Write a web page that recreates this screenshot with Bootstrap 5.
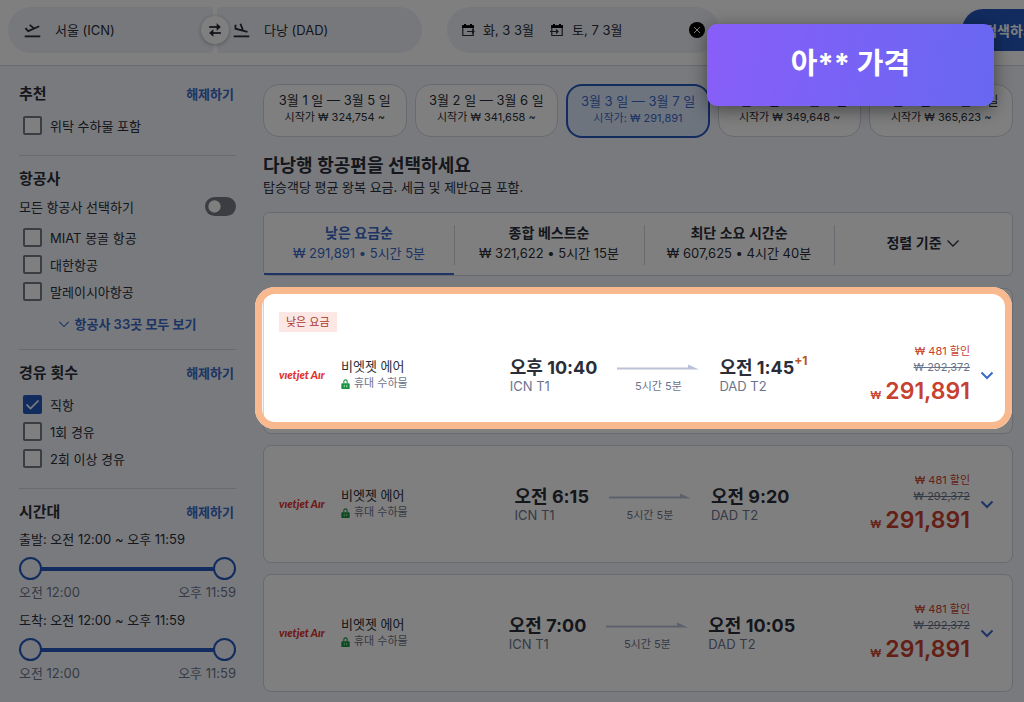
<!DOCTYPE html>
<html lang="ko">
<head>
<meta charset="utf-8">
<meta name="viewport" content="width=device-width, initial-scale=1">
<title>다낭행 항공편</title>
<link href="https://cdn.jsdelivr.net/npm/bootstrap@5.3.0/dist/css/bootstrap.min.css" rel="stylesheet">
<style>
:root{--blue:#3a69c8;--blue-deep:#2459c0;--ink:#2a2e38;--muted:#6c748c;--line:#cfd4df;--red:#c8402f;--page:#f2f5fa}
body{font-family:Inter,"Noto Sans CJK KR",sans-serif;background:var(--page);color:var(--ink);font-size:13px;line-height:18px;overflow-x:hidden}
a{color:var(--blue);text-decoration:none}
.topbar{background:#fff;border-bottom:1px solid var(--line);padding:7px 0 12px 8px;overflow:hidden}
.topbar-row{min-width:1050px}
.field{background:#eef1f8;height:46px;font-size:13px;border:0;color:var(--ink)}
.route-field{width:205px;padding-left:16px;gap:14px;text-align:left}
.from{border-radius:23px 4px 4px 23px}
.to{border-radius:4px 23px 23px 4px}
.swap{width:28px;height:28px;left:50%;top:50%;transform:translate(-50%,-50%);background:#fff;border:0;border-radius:50%;box-shadow:0 1px 4px rgba(0,0,0,.3)}
.dates{width:272px;border-radius:23px;padding:0 14px;margin-left:25px}
.clear-btn{width:16px;height:16px;border:0;border-radius:50%;background:#000;color:#fff}
.search-btn,.search-btn:hover{height:42px;width:96px;border-radius:21px;background:var(--blue-deep);color:#fff;font-size:14px;font-weight:600}
.layout{padding:18px 11px 10px 19px;gap:27px}
.filters{width:217px}
.filters section{border-bottom:1px solid var(--line);padding-bottom:16px;margin-bottom:13px}
.filters section:last-child{border:0;margin:0;padding:0}
.filters h2{font-size:15px;line-height:20px;font-weight:600;margin:0}
.reset{font-weight:600}
.head-row .reset{padding-right:2px}
.show-all{margin-top:10px}
.opt{display:flex;align-items:center;gap:8px;height:27px;padding-left:4px}
.opt .form-check-input{width:19px;height:19px;margin:0;border:2px solid #777b85;border-radius:2px;background-color:#fff}
.opt .form-check-input:checked{background-color:var(--blue-deep);border-color:var(--blue-deep);background-size:19px;background-image:url("data:image/svg+xml,%3csvg xmlns='http://www.w3.org/2000/svg' viewBox='0 0 19 19'%3e%3cpath d='M3.500 9.500l4 4 8-8' fill='none' stroke='%23fff' stroke-width='1.700'/%3e%3c/svg%3e")}
.toggle .form-check-input{width:31px;height:19px;margin:0;background-color:#777b85;border:0}
.toggle .form-check-input:not(:checked){background-image:url("data:image/svg+xml,%3csvg xmlns='http://www.w3.org/2000/svg' viewBox='-4 -4 8 8'%3e%3ccircle r='2.600' fill='%23fff'/%3e%3c/svg%3e")}
.dual{display:grid;height:24px;margin:9px 0 1px}
.dual input{grid-area:1/1;height:24px;pointer-events:none}
.dual input::-webkit-slider-runnable-track{height:4px;background:var(--blue-deep)}
.dual input+input::-webkit-slider-runnable-track{background:transparent}
.dual input::-webkit-slider-thumb{width:23px;height:23px;margin-top:-10px;background:var(--page);border:2px solid var(--blue-deep);pointer-events:auto}
.ends{color:var(--muted);line-height:20px;margin-bottom:9px}
.date-card{flex:1 1 20%;height:53px;padding:6px 0 0;background:#fff;border:1px solid var(--line);border-radius:16px;color:var(--ink);display:flex;flex-direction:column;align-items:center;justify-content:flex-start;white-space:nowrap}
.date-card span{font-size:13px;line-height:18px}
.date-card small{font-size:11px;line-height:16px}
.date-card.picked{height:54px;border:2px solid var(--blue-deep);background:#dde8fc;color:var(--blue)}
.headline{font-size:18px;line-height:24px;font-weight:600;margin:0}
.sorts{height:64px;background:#fff;border:1px solid var(--line);border-radius:6px}
.sort-tab{flex:190 1 0;background:none;border:0;border-bottom:2px solid transparent;padding:0;position:relative;color:var(--ink);line-height:20px}
.sort-tab b{display:block;font-size:14px;font-weight:600}
.sort-tab+.sort-tab::before{content:"";position:absolute;left:0;top:12px;height:40px;border-left:1px solid var(--line)}
.sort-tab.current{color:var(--blue);border-color:var(--blue)}
.sort-tab:last-child{flex-grow:178}
.fares{gap:11px;margin-top:12px}
.fare{background:#fff;border:1px solid var(--line);border-radius:8px;padding:29px 18px 29px 15px;position:relative}
.fare.best{padding-top:23px}
.tag{display:inline-block;background:#fde7e4;color:#a9352b;font-size:11px;line-height:20px;padding:0 7px;margin-bottom:14px}
.fare-row{height:58px}
.logo-text{width:62px;font:italic 900 11px/14px Lato,sans-serif;color:#e0322c;white-space:nowrap}
.airline{width:121px;line-height:17px}
.small-note{font-size:11px;line-height:17px;color:var(--muted)}
.flight{gap:20px}
.clock{font-size:18px;line-height:22px;font-weight:700;position:relative;white-space:nowrap}
.next-day{position:absolute;left:100%;top:-7px;font-size:12px;color:#b9531c}
.place{line-height:14px;color:var(--muted)}
.span-col{width:82px;font-size:11px;line-height:14px;color:var(--muted);text-align:center}
.span-col svg{display:block;height:22px}
.price{width:128px;text-align:right;color:var(--red)}
.price div{font-size:11px;line-height:16px}
.price .old{color:var(--muted)}
.price .now{font-size:23px;line-height:26px;padding-top:3px;font-weight:600;display:flex;justify-content:flex-end;align-items:baseline;gap:4px}
.price .now small{font-size:11px}
.more{border:0;background:none;padding:0;margin-left:10px;color:var(--blue);line-height:0}
.spotlight{position:absolute;z-index:10;inset:-2px 0 4px -9px;border:7px solid #f9b98f;border-radius:20px;box-shadow:0 0 0 3000px rgba(0,0,0,.5);pointer-events:none}
.callout{position:absolute;z-index:20;top:24px;right:30px;width:287px;height:82px;padding-bottom:3px;border-radius:10px;background:linear-gradient(100deg,#885ef8,#6867f2);box-shadow:0 4px 18px rgba(0,0,0,.45);color:#fff;font-size:29px;font-weight:700}
</style>
</head>
<body>
<svg class="d-none" xmlns="http://www.w3.org/2000/svg">
  <symbol id="i-down" viewBox="0 0 14 14"><path d="M1.500 4.500 7 10l5.500-5.500" fill="none" stroke="currentColor" stroke-width="2"/></symbol>
  <symbol id="i-thin" viewBox="0 0 14 14"><path d="M1.500 4.500 7 10l5.500-5.500" fill="none" stroke="currentColor" stroke-width="1.300"/></symbol>
  <symbol id="i-lock" viewBox="0 0 10 12"><path d="M1 5h8q1 0 1 1v5q0 1-1 1H1q-1 0-1-1V6q0-1 1-1z" fill="#16923f"/><path d="M3 5V3a2 2 0 0 1 4 0v2" fill="none" stroke="#16923f" stroke-width="1.300"/><path d="M3.500 7v3M6.500 7v3" stroke="#bfe6cb"/></symbol>
  <symbol id="i-arrow" viewBox="0 0 82 22"><path d="M0 12.500h82L71 7.500v3H0z" fill="#bcc1d6"/></symbol>
  <symbol id="i-off" viewBox="0 0 24 24"><path d="M2 8.500l4 4.500L21.500 6M8 4l6 5" fill="none" stroke="currentColor" stroke-width="2.600"/><path d="M1 19h22v2.600H1z" fill="currentColor"/></symbol>
  <symbol id="i-land" viewBox="0 0 24 24"><path d="M3.500 4v5.500L20.500 14M10.500 2.500l3.500 9" fill="none" stroke="currentColor" stroke-width="2.600"/><path d="M1 19h22v2.600H1z" fill="currentColor"/></symbol>
  <symbol id="i-cal" viewBox="0 0 14 14"><path d="M1.800 3h10.400v9.500H1.800z" fill="none" stroke="currentColor" stroke-width="1.200"/><path d="M1 2.300h12V5H1zM3 1h2v2H3zM9 1h2v2H9z"/></symbol>
</svg>

<header class="topbar">
  <div class="topbar-row d-flex align-items-center">
    <div class="d-flex gap-1 position-relative">
      <button class="field route-field from d-flex align-items-center"><svg width="17" height="17"><use href="#i-off"/></svg>서울 (ICN)</button>
      <button class="field route-field to d-flex align-items-center"><svg width="17" height="17"><use href="#i-land"/></svg>다낭 (DAD)</button>
      <button class="swap position-absolute d-flex align-items-center justify-content-center p-0" aria-label="출발지와 도착지 바꾸기"><svg width="12" height="14" viewBox="0 0 12 14"><path d="M0 3h7.500V0L12 4 7.500 8V5H0zM12 9H4.500V6L0 10l4.500 4v-3H12z" fill="#22262f" stroke="#fff" stroke-width=".3"/></svg></button>
    </div>
    <div class="field dates d-flex align-items-center">
      <svg class="me-2" width="14" height="14"><use href="#i-cal"/><path d="M6 8.500h7M11 6.500l2 2-2 2" fill="none" stroke="currentColor" stroke-width="1.200"/></svg>
      <span class="me-3">화, 3 3월</span>
      <svg class="me-2" width="14" height="14"><use href="#i-cal"/><path d="M0 8.500h8M6 6.500l2 2-2 2" fill="none" stroke="currentColor" stroke-width="1.200"/></svg>
      <span>토, 7 3월</span>
      <button class="clear-btn ms-auto p-0 d-flex align-items-center justify-content-center" aria-label="날짜 지우기"><svg width="8" height="8" viewBox="0 0 8 8"><path d="M1 1l6 6M7 1 1 7" stroke="#fff"/></svg></button>
    </div>
    <button class="btn search-btn p-0 ms-auto">검색하기</button>
  </div>
</header>

<div class="layout d-flex">
  <aside class="filters flex-shrink-0">
    <section>
      <div class="head-row d-flex justify-content-between align-items-center mb-2"><h2>추천</h2><a class="reset" href="#">해제하기</a></div>
      <div class="opt"><input class="form-check-input" type="checkbox" id="bag"><label for="bag">위탁 수하물 포함</label></div>
    </section>
    <section>
      <h2>항공사</h2>
      <div class="toggle d-flex justify-content-between align-items-center form-switch p-0 mt-2 mb-2"><label for="all">모든 항공사 선택하기</label><input class="form-check-input" type="checkbox" role="switch" id="all"></div>
      <div class="opt"><input class="form-check-input" type="checkbox" id="a1"><label for="a1">MIAT 몽골 항공</label></div>
      <div class="opt"><input class="form-check-input" type="checkbox" id="a2"><label for="a2">대한항공</label></div>
      <div class="opt"><input class="form-check-input" type="checkbox" id="a3"><label for="a3">말레이시아항공</label></div>
      <a href="#" class="show-all d-flex align-items-center justify-content-center gap-1 reset"><svg width="12" height="12"><use href="#i-thin"/></svg>항공사 33곳 모두 보기</a>
    </section>
    <section>
      <div class="head-row d-flex justify-content-between align-items-center mb-2"><h2>경유 횟수</h2><a class="reset" href="#">해제하기</a></div>
      <div class="opt"><input class="form-check-input" type="checkbox" id="s0" checked><label for="s0">직항</label></div>
      <div class="opt"><input class="form-check-input" type="checkbox" id="s1"><label for="s1">1회 경유</label></div>
      <div class="opt"><input class="form-check-input" type="checkbox" id="s2"><label for="s2">2회 이상 경유</label></div>
    </section>
    <section>
      <div class="head-row d-flex justify-content-between align-items-center mb-2"><h2>시간대</h2><a class="reset" href="#">해제하기</a></div>
      <div>출발: 오전 12:00 ~ 오후 11:59</div>
      <div class="dual"><input class="form-range" type="range" value="0" aria-label="출발 최소 시간"><input class="form-range" type="range" value="100" aria-label="출발 최대 시간"></div>
      <div class="ends d-flex justify-content-between"><span>오전 12:00</span><span>오후 11:59</span></div>
      <div>도착: 오전 12:00 ~ 오후 11:59</div>
      <div class="dual"><input class="form-range" type="range" value="0" aria-label="도착 최소 시간"><input class="form-range" type="range" value="100" aria-label="도착 최대 시간"></div>
      <div class="ends d-flex justify-content-between"><span>오전 12:00</span><span>오후 11:59</span></div>
    </section>
  </aside>

  <main class="flex-grow-1">
    <div class="d-flex align-items-start gap-2">
      <button class="date-card"><span>3월 1 일 — 3월 5 일</span><small>시작가 ₩ 324,754 ~</small></button>
      <button class="date-card"><span>3월 2 일 — 3월 6 일</span><small>시작가 ₩ 341,658 ~</small></button>
      <button class="date-card picked"><span>3월 3 일 — 3월 7 일</span><small>시작가: ₩ 291,891</small></button>
      <button class="date-card"><span>3월 4 일 — 3월 8 일</span><small>시작가 ₩ 349,648 ~</small></button>
      <button class="date-card"><span>3월 5 일 — 3월 9 일</span><small>시작가 ₩ 365,623 ~</small></button>
    </div>
    <h1 class="headline mt-3">다낭행 항공편을 선택하세요</h1>
    <p class="mt-0 mb-3">탑승객당 평균 왕복 요금. 세금 및 제반요금 포함.</p>

    <div class="sorts d-flex">
      <button class="sort-tab current"><b>낮은 요금순</b>₩ 291,891 • 5시간 5분</button>
      <button class="sort-tab"><b>종합 베스트순</b>₩ 321,622 • 5시간 15분</button>
      <button class="sort-tab"><b>최단 소요 시간순</b>₩ 607,625 • 4시간 40분</button>
      <button class="sort-tab d-flex align-items-center justify-content-center gap-1"><b>정렬 기준</b><svg width="14" height="14"><use href="#i-thin"/></svg></button>
    </div>

    <div class="d-grid fares">
      <article class="fare best">
        <div class="tag">낮은 요금</div>
        <div class="fare-row d-flex align-items-center">
          <div class="logo-text">vıetjet Aır</div>
          <div class="airline"><div>비엣젯 에어</div><div class="small-note d-flex align-items-center gap-1"><svg width="9" height="10"><use href="#i-lock"/></svg>휴대 수하물</div></div>
          <div class="flex-grow-1 d-flex justify-content-center flight">
            <div><div class="clock">오후 10:40</div><div class="place">ICN T1</div></div>
            <div class="span-col"><svg width="82"><use href="#i-arrow"/></svg>5시간 5분</div>
            <div><div class="clock">오전 1:45<span class="next-day">+1</span></div><div class="place">DAD T2</div></div>
          </div>
          <div class="price"><div>₩ 481 할인</div><div class="old"><s>₩ 292,372</s></div><div class="now"><small>₩</small>291,891</div></div>
          <button class="more" aria-label="상세 보기"><svg width="14" height="14"><use href="#i-down"/></svg></button>
        </div>
        <div class="spotlight"></div>
      </article>
      <article class="fare">
        <div class="fare-row d-flex align-items-center">
          <div class="logo-text">vıetjet Aır</div>
          <div class="airline"><div>비엣젯 에어</div><div class="small-note d-flex align-items-center gap-1"><svg width="9" height="10"><use href="#i-lock"/></svg>휴대 수하물</div></div>
          <div class="flex-grow-1 d-flex justify-content-center flight">
            <div><div class="clock">오전 6:15</div><div class="place">ICN T1</div></div>
            <div class="span-col"><svg width="82"><use href="#i-arrow"/></svg>5시간 5분</div>
            <div><div class="clock">오전 9:20</div><div class="place">DAD T2</div></div>
          </div>
          <div class="price"><div>₩ 481 할인</div><div class="old"><s>₩ 292,372</s></div><div class="now"><small>₩</small>291,891</div></div>
          <button class="more" aria-label="상세 보기"><svg width="14" height="14"><use href="#i-down"/></svg></button>
        </div>
      </article>
      <article class="fare">
        <div class="fare-row d-flex align-items-center">
          <div class="logo-text">vıetjet Aır</div>
          <div class="airline"><div>비엣젯 에어</div><div class="small-note d-flex align-items-center gap-1"><svg width="9" height="10"><use href="#i-lock"/></svg>휴대 수하물</div></div>
          <div class="flex-grow-1 d-flex justify-content-center flight">
            <div><div class="clock">오전 7:00</div><div class="place">ICN T1</div></div>
            <div class="span-col"><svg width="82"><use href="#i-arrow"/></svg>5시간 5분</div>
            <div><div class="clock">오전 10:05</div><div class="place">DAD T2</div></div>
          </div>
          <div class="price"><div>₩ 481 할인</div><div class="old"><s>₩ 292,372</s></div><div class="now"><small>₩</small>291,891</div></div>
          <button class="more" aria-label="상세 보기"><svg width="14" height="14"><use href="#i-down"/></svg></button>
        </div>
      </article>
    </div>
  </main>
</div>
<div class="callout d-flex align-items-center justify-content-center">아** 가격</div>
<script src="https://cdn.jsdelivr.net/npm/bootstrap@5.3.0/dist/js/bootstrap.bundle.min.js"></script>
</body>
</html>
